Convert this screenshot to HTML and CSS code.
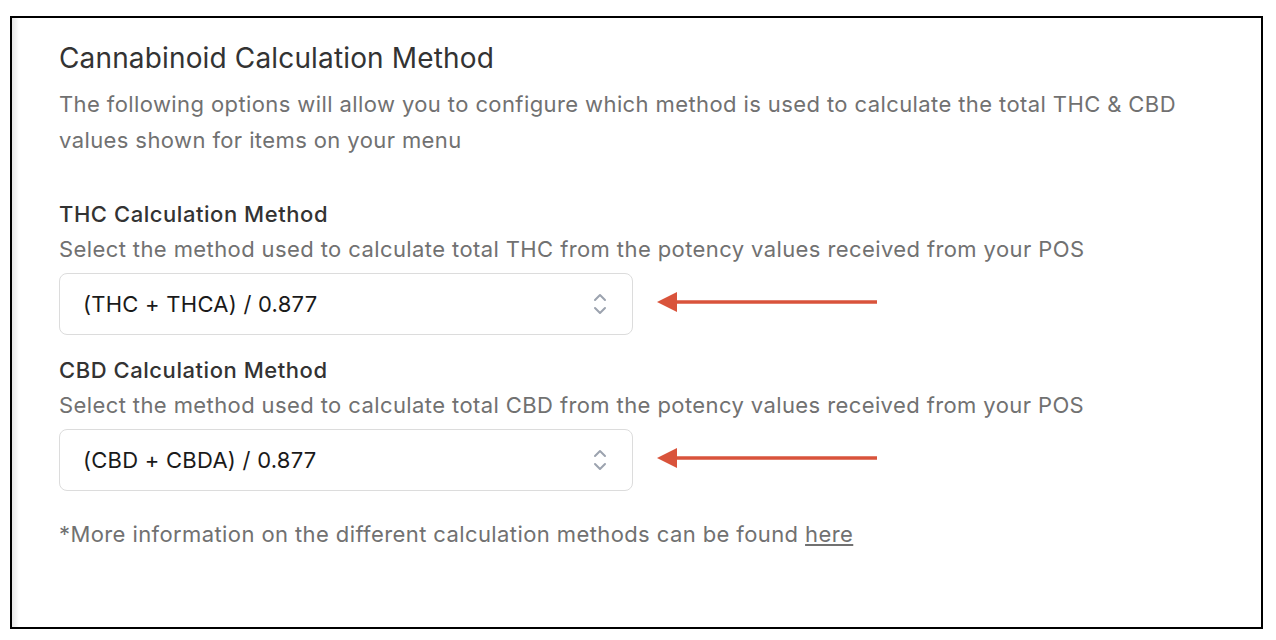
FILE: index.html
```html
<!DOCTYPE html>
<html lang="en">
<head>
    <meta charset="UTF-8">
    <title>Cannabinoid Calculation Method</title>
    <link rel="stylesheet" href="styles.css">
</head>
<body>
    <div class="frame">
        <div class="panel">
            <h2 class="title">Cannabinoid Calculation Method</h2>
            <p class="intro">The following options will allow you to configure which method is used to calculate the total THC &amp; CBD values shown for items on your menu</p>

            <div class="field">
                <div class="label">THC Calculation Method</div>
                <p class="help">Select the method used to calculate total THC from the potency values received from your POS</p>
                <div class="row">
                    <div class="select">
                        <span>(THC + THCA) / 0.877</span>
                        <svg class="chev" width="14" height="24" viewBox="0 0 14 24"><path d="M2 8l5-5 5 5M2 16l5 5 5-5" fill="none" stroke="#9ca3af" stroke-width="2" stroke-linecap="round" stroke-linejoin="round"/></svg>
                    </div>
                    <svg class="arrow" width="222" height="22" viewBox="0 0 222 22"><path d="M18 11H220" stroke="#d9533b" stroke-width="3.5"/><path d="M0 11L20 1V21Z" fill="#d9533b"/></svg>
                </div>
            </div>

            <div class="field second">
                <div class="label">CBD Calculation Method</div>
                <p class="help">Select the method used to calculate total CBD from the potency values received from your POS</p>
                <div class="row">
                    <div class="select">
                        <span>(CBD + CBDA) / 0.877</span>
                        <svg class="chev" width="14" height="24" viewBox="0 0 14 24"><path d="M2 8l5-5 5 5M2 16l5 5 5-5" fill="none" stroke="#9ca3af" stroke-width="2" stroke-linecap="round" stroke-linejoin="round"/></svg>
                    </div>
                    <svg class="arrow" width="222" height="22" viewBox="0 0 222 22"><path d="M18 11H220" stroke="#d9533b" stroke-width="3.5"/><path d="M0 11L20 1V21Z" fill="#d9533b"/></svg>
                </div>
            </div>

            <p class="note">*More information on the different calculation methods can be found <a href="#">here</a></p>
        </div>
    </div>
</body>
</html>
```

FILE: styles.css
```css
body {
    font-family: Inter, "Liberation Sans", Arial, sans-serif;
    margin: 0;
    padding: 0;
    background-color: white;
    color: #333;
}
.frame {
    margin: 16px 13px 0 10px;
    height: 613px;
    box-sizing: border-box;
    border: 2px solid black;
    background: linear-gradient(to right, #e6e6e6, #f7f7f7 5px, white 7px);
}
.panel {
    padding: 24px 0 0 47px;
}
.title {
    font-size: 28px;
    font-weight: normal;
    line-height: 32px;
    letter-spacing: 0.15px;
    margin: 0;
    color: #333;
}
.intro {
    font-size: 22px;
    line-height: 36px;
    letter-spacing: 0.4px;
    color: #717171;
    margin: 12px 60px 0 0;
}
.field {
    margin-top: 42px;
}
.field.second {
    margin-top: 21px;
}
.label {
    font-size: 22px;
    line-height: 28px;
    font-weight: 500;
    letter-spacing: 0.55px;
    color: #333;
}
.help {
    font-size: 22px;
    line-height: 28px;
    letter-spacing: 0.4px;
    color: #717171;
    margin: 7px 0 0 0;
}
.row {
    display: flex;
    align-items: center;
    gap: 24px;
    margin-top: 10px;
}
.arrow {
    margin-top: -4px;
}
.select {
    width: 574px;
    height: 62px;
    box-sizing: border-box;
    border: 1px solid #dcdcdc;
    border-radius: 8px;
    display: flex;
    align-items: center;
    justify-content: space-between;
    padding: 0 25px 0 23px;
    font-size: 22px;
    letter-spacing: 0.25px;
    color: #1a1a1a;
}
.note {
    font-size: 22px;
    line-height: 28px;
    letter-spacing: 0.4px;
    color: #717171;
    margin: 29px 0 0 0;
}
.note a {
    color: #717171;
}
```
